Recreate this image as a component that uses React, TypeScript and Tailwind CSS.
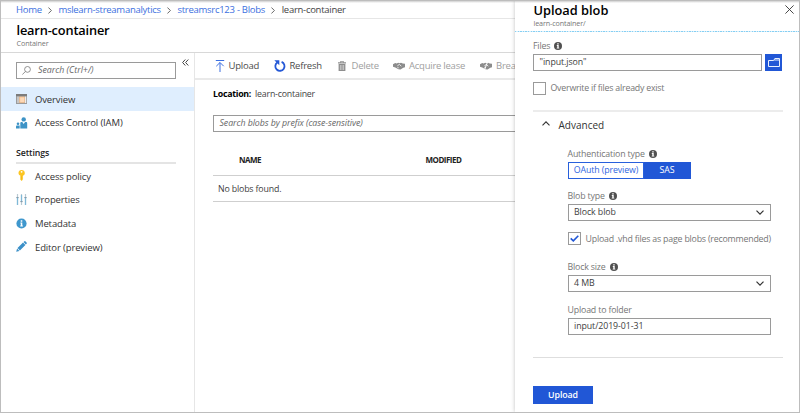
import type { ReactNode } from 'react';

function InfoIcon() {
  return (
    <svg className="h-[8px] w-[8px] shrink-0" viewBox="0 0 16 16">
      <circle cx="8" cy="8" r="8" fill="#505050" />
      <path d="M5.600 6.200h3.800v5.200h1.200v1.600H5.400v-1.600h1.200V7.800h-1zM6.500 2.700h2.900v2.500H6.500z" fill="#fff" />
    </svg>
  );
}

function Chevron() {
  return (
    <svg className="mx-[6.300px] h-[7px] w-[4px] shrink-0" viewBox="0 0 4 7" fill="none" stroke="#666" strokeWidth="1">
      <path d="M.4.500l3 3-3 3" />
    </svg>
  );
}

function OverviewIcon() {
  return (
    <svg className="h-[10px] w-[11px]" viewBox="0 0 11 10">
      <path d="M0 0h11v10H0z" fill="#9b9b9b" />
      <path d="M0 0h11v2.200H0z" fill="#7c7c7c" />
      <path d="M1 2.600h2v6.500H1z" fill="#c6c6c6" />
      <path d="M3.200 2.600h5.600v6.200H3.200z" fill="#fbc391" />
      <path d="M4.200 3.600h4v4.400h-4z" fill="#fdd9b8" />
      <path d="M9 2.600h1.200v6.500H9z" fill="#ededed" />
    </svg>
  );
}

function AccessIcon() {
  return (
    <svg className="h-[12px] w-[12px]" viewBox="0 0 12 12" fill="#3d93c6">
      <circle cx="7.700" cy="2.400" r="2.200" />
      <path d="M4.300 11.500V6.200c0-.8.5-1.300 1.300-1.300h.7L7.600 7l1.500-2.100h.8c.8 0 1.300.5 1.300 1.300v5.300z" />
      <circle cx="2" cy="6.800" r="1.300" />
      <path d="M0 11.500V9.600c0-.7.4-1.100 1-1.100h2.700v3z" />
    </svg>
  );
}

function KeyIcon() {
  return (
    <svg className="h-[11px] w-[11px]" viewBox="0 0 11 11">
      <path d="M5.600 0c1.900 0 3.200 1.200 3.200 2.900 0 1.300-.7 2.200-1.700 2.700v.7l-.6.7.6.7v.6l-.6.6.4.600-1.200 1.500-1.300-1.300V5.600c-1.100-.5-1.900-1.400-1.900-2.700C2.500 1.200 3.700 0 5.600 0z" fill="#fcc521" />
      <circle cx="5.600" cy="1.800" r=".9" fill="#fff" />
      <path d="M5.300 5.800v3.800" stroke="#e6a90c" strokeWidth=".5" />
    </svg>
  );
}

function PropertiesIcon() {
  return (
    <svg className="h-[11px] w-[11px]" viewBox="0 0 11 11">
      <path d="M1.500 0v11M5.500 0v11M9.500 0v11" stroke="#b9c9d2" strokeWidth="1.200" />
      <path d="M1.500 4v7M5.500 1v6M9.500 4v7" stroke="#7fb9d8" strokeWidth="1.200" />
      <path d="M.3 3.600h2.400M4.300 7.600h2.400M8.300 3.600h2.400" stroke="#7e98a8" strokeWidth="1" />
    </svg>
  );
}

function MetadataIcon() {
  return (
    <svg className="h-[11px] w-[11px]" viewBox="0 0 11 11">
      <circle cx="5.500" cy="5.500" r="5.100" fill="#3f97cd" />
      <path d="M4.400 4.600h1.900v3h.6v1H4.200v-1h.6v-2h-.4zM4.700 2.200h1.600v1.500H4.700z" fill="#fff" />
    </svg>
  );
}

function EditorIcon() {
  return (
    <svg className="h-[11px] w-[11px]" viewBox="0 0 11 11" fill="#3b90c8">
      <path d="M.2 10.800l.9-3.200 2.300 2.300zM1.500 7.100L7 1.600 9.400 4 3.900 9.500zM7.500 1.100L8.300.4c.4-.4.8-.4 1.200 0l1.100 1.100c.4.4.4.8 0 1.200l-.8.8z" />
    </svg>
  );
}

function UploadIcon() {
  return (
    <svg className="h-[12px] w-[10px]" viewBox="0 0 10 12" fill="none" stroke="#3c6fe0" strokeWidth="1">
      <path d="M.8.500h8.400M5 12V2.600M1.300 6.200L5 2.500l3.700 3.700" />
    </svg>
  );
}

function RefreshIcon() {
  return (
    <svg className="h-[12px] w-[12px]" viewBox="0 0 12 12">
      <path d="M7.600 1.900a4.600 4.600 0 1 1-4.300.5" fill="none" stroke="#2559d6" strokeWidth="1.800" />
      <path d="M.3.300h5v5z" fill="#2559d6" />
    </svg>
  );
}

function TrashIcon() {
  return (
    <svg className="h-[10px] w-[8px]" viewBox="0 0 8 10">
      <path d="M0 1.300h2.300V0h3.400v1.300H8v1.100H0zM.6 3h6.800v7H.6z" fill="#8e8e8e" />
      <path d="M2.400 4v5M4 4v5M5.600 4v5" stroke="#fff" strokeWidth=".5" />
      <path d="M3 .700h2v.600H3z" fill="#fff" />
    </svg>
  );
}

function HandsIcon({ broken = false }: { broken?: boolean }) {
  return (
    <svg className="h-[8px] w-[12px]" viewBox="0 0 12 8">
      <path d="M0 2.200L2.200 1l1.500.5L5.200.7l1.200.6L8 .7l1.800.8L12 1.800v3.500l-1.700.4L7.500 7.500 5.400 7.300 2.300 5.600 0 4.800z" fill="#8c8c8c" />
      <path d="M4.500 3.500l2-1 1.800 1.700M4.300 5.200l1.400.7" fill="none" stroke="#fff" strokeWidth=".8" />
      {broken && <path d="M4.400 8L7.600 0" stroke="#fff" strokeWidth="1" />}
    </svg>
  );
}

function MenuItem({ icon, children, active = false }: { icon: ReactNode; children: ReactNode; active?: boolean }) {
  return (
    <div className={`flex h-[23.700px] items-center pl-[15px] text-[9.500px] tracking-[-0.130px] text-[#333] ${active ? 'bg-[#dfeefe]' : ''}`}>
      <span className="flex w-[19px] shrink-0 items-center">{icon}</span>
      <span className="pt-[2px]">{children}</span>
    </div>
  );
}

function Tool({ icon, children, disabled = false }: { icon: ReactNode; children: ReactNode; disabled?: boolean }) {
  return (
    <div className={`flex shrink-0 items-center text-[9.500px] tracking-[-0.240px] ${disabled ? 'text-[#a0a0a0]' : 'text-[#4c4c4c]'}`}>
      {icon}
      <span className="pt-[2px]">{children}</span>
    </div>
  );
}

function Label({ children, info = false }: { children: ReactNode; info?: boolean }) {
  return (
    <div className="flex h-[16px] items-center gap-[4px] text-[8.800px] tracking-[-0.170px] text-[#767676]">
      <span className="pt-[1px]">{children}</span>
      {info && <InfoIcon />}
    </div>
  );
}

function Field({ children, select = false }: { children: ReactNode; select?: boolean }) {
  return (
    <div className="flex h-[17px] items-center justify-between border border-[#9a9a9a] pr-[6px] pl-[5.500px] text-[8.800px] tracking-[-0.080px] text-[#404040]">
      <span className="pt-[1px]">{children}</span>
      {select && (
        <svg className="h-[5px] w-[8px]" viewBox="0 0 8 5" fill="none" stroke="#333" strokeWidth="1.200">
          <path d="M.5.600L4 4.100 7.500.600" />
        </svg>
      )}
    </div>
  );
}

function Sidebar() {
  return (
    <aside className="w-[194px] shrink-0 border-r border-[#e6e6e6]">
      <div className="flex h-[34px] items-start pt-[9px] pl-[15px]">
        <div className="flex h-[17px] w-[160px] items-center border border-[#9a9a9a] pl-[5px] text-[8.800px] text-[#666] italic">
          <svg className="mr-[7px] h-[9px] w-[9px]" viewBox="0 0 9 9" fill="none" stroke="#777" strokeWidth=".8">
            <circle cx="5.500" cy="3.400" r="2.900" />
            <path d="M3.400 5.500L.3 8.600" />
          </svg>
          Search (Ctrl+/)
        </div>
        <svg className="mt-[-3px] ml-[6px] h-[7px] w-[7px]" viewBox="0 0 7 7" fill="none" stroke="#444" strokeWidth="1">
          <path d="M3.300.500L.6 3.500l2.700 3M6.300.500L3.600 3.500l2.700 3" />
        </svg>
      </div>
      <MenuItem icon={<OverviewIcon />} active>Overview</MenuItem>
      <MenuItem icon={<AccessIcon />}>Access Control (IAM)</MenuItem>
      <div className="mt-[7px] mr-[18px] ml-[15px] flex h-[22.600px] items-center border-b-2 border-[#e4e4e4] text-[8.800px] font-semibold tracking-[-0.100px] text-[#222]">
        <span className="pt-[3px]">Settings</span>
      </div>
      <MenuItem icon={<KeyIcon />}>Access policy</MenuItem>
      <MenuItem icon={<PropertiesIcon />}>Properties</MenuItem>
      <MenuItem icon={<MetadataIcon />}>Metadata</MenuItem>
      <MenuItem icon={<EditorIcon />}>Editor (preview)</MenuItem>
    </aside>
  );
}

function Blobs() {
  return (
    <main className="min-w-0 flex-1 overflow-hidden whitespace-nowrap">
      <div className="flex h-[27px] items-center border-b-2 border-[#e9e9e9] pl-[19.500px]">
        <div className="w-[59px] shrink-0"><Tool icon={<span className="mr-[4px]"><UploadIcon /></span>}>Upload</Tool></div>
        <div className="w-[64px] shrink-0"><Tool icon={<span className="mr-[4px]"><RefreshIcon /></span>}>Refresh</Tool></div>
        <div className="w-[55.500px] shrink-0"><Tool disabled icon={<span className="mr-[6px]"><TrashIcon /></span>}>Delete</Tool></div>
        <div className="w-[87px] shrink-0"><Tool disabled icon={<span className="mr-[4px]"><HandsIcon /></span>}>Acquire lease</Tool></div>
        <Tool disabled icon={<span className="mr-[4px]"><HandsIcon broken /></span>}>Break lease</Tool>
      </div>
      <div className="pl-[18px]">
        <div className="flex h-[28px] items-center pt-[1px] text-[8.800px] tracking-[-0.200px] text-[#444]">
          <span className="mr-[4px] font-bold tracking-[-0.270px] text-black">Location:</span>learn-container
        </div>
        <div className="mt-[7px] flex h-[17px] items-center border border-r-0 border-[#9a9a9a] pl-[5.500px] text-[8.800px] tracking-[-0.060px] text-[#666] italic">
          Search blobs by prefix (case-sensitive)
        </div>
        <div className="mt-[13px] flex h-[31px] items-center border-b border-[#cfcfcf] pl-[26px] text-[8px] font-bold tracking-[-0.500px] text-[#222]">
          <span className="w-[186.500px]">NAME</span>
          <span>MODIFIED</span>
        </div>
        <div className="flex h-[26px] items-center border-b border-[#cfcfcf] pt-[2px] pl-[5px] text-[8.800px] tracking-[-0.160px] text-[#404040]">No blobs found.</div>
      </div>
    </main>
  );
}

function UploadPanel() {
  return (
    <section className="z-10 flex w-[284px] shrink-0 flex-col bg-white shadow-[0_0_4px_rgba(0,0,0,0.25)]">
      <div className="h-[2px] shrink-0 bg-gradient-to-b from-[#cfcfcf] to-white" />
      <header className="flex h-[28px] shrink-0 justify-between pr-[5px] pl-[18.500px]">
        <div>
          <h2 className="text-[12.800px] leading-[15px] font-semibold text-black">Upload blob</h2>
          <p className="text-[7.200px] leading-[10px] tracking-[-0.130px] text-[#777]">learn-container/</p>
        </div>
        <svg className="mt-[2px] h-[9px] w-[9px]" viewBox="0 0 9 9" fill="none" stroke="#333" strokeWidth=".9">
          <path d="M.4.400l8.200 8.200M8.600.400L.4 8.600" />
        </svg>
      </header>
      <div className="h-px shrink-0 bg-[repeating-linear-gradient(90deg,#86cff3_0_1.500px,#d8effb_1.500px_2.600px)]" />
      <div className="mr-[16px] ml-[18px] flex flex-1 flex-col">
        <div className="mt-[6px]"><Label info>Files</Label></div>
        <div className="flex gap-[3px]">
          <div className="w-[229px]"><Field>&quot;input.json&quot;</Field></div>
          <button className="flex h-[17px] w-[17px] items-center justify-center bg-[#2157d6]">
            <svg className="h-[9px] w-[12px]" viewBox="0 0 12 9" fill="none" stroke="#e8f0ff" strokeWidth="1">
              <path d="M.5 8.500v-6h5.200L6.800.500h4.700v8z" />
              <path d="M6.200 2h5" />
            </svg>
          </button>
        </div>
        <div className="mt-[11px] flex h-[13px] items-center gap-[4.500px] text-[8.800px] tracking-[-0.220px] text-[#767676]">
          <span className="h-[13px] w-[13px] border border-[#9a9a9a]" />
          <span className="pt-[1px]">Overwrite if files already exist</span>
        </div>
        <div className="mt-[15px] flex h-[29px] items-center border-t-2 border-[#ececec] pl-[9px] text-[10px] text-[#333]">
          <svg className="mr-[8.500px] mb-[4px] h-[5px] w-[8px]" viewBox="0 0 8 5" fill="none" stroke="#333" strokeWidth="1.100">
            <path d="M.5 4.400L4 .900l3.500 3.500" />
          </svg>
          <span className="pb-[1px]">Advanced</span>
        </div>
        <div className="mr-[12px] ml-[34.500px] flex flex-col pt-[7px]">
          <Label info>Authentication type</Label>
          <div className="flex h-[17px] w-[123px] text-[8.800px]">
            <button className="w-[76px] border border-[#2860dc] pt-[1px] pl-[1px] tracking-[-0.120px] whitespace-nowrap text-[#2f66df]">OAuth (preview)</button>
            <button className="flex-1 bg-[#2157d6] pt-[1px] text-white">SAS</button>
          </div>
          <div className="mt-[9px]"><Label info>Blob type</Label></div>
          <Field select>Block blob</Field>
          <div className="mt-[11px] flex h-[13px] items-center gap-[5px] text-[8.800px] tracking-[-0.200px] whitespace-nowrap text-[#767676]">
            <span className="flex h-[13px] w-[13px] shrink-0 items-center justify-center border border-[#9a9a9a]">
              <svg className="h-[7px] w-[9px]" viewBox="0 0 9 7" fill="none" stroke="#2157d6" strokeWidth="1.600">
                <path d="M.7 3.400l2.600 2.500L8.300.700" />
              </svg>
            </span>
            <span className="pt-[2px]">Upload .vhd files as page blobs (recommended)</span>
          </div>
          <div className="mt-[14px]"><Label info>Block size</Label></div>
          <Field select>4 MB</Field>
          <div className="mt-[10px]"><Label>Upload to folder</Label></div>
          <Field>input/2019-01-31</Field>
        </div>
        <div className="mt-[22px] border-t border-[#dedede]" />
        <button className="mt-[28px] h-[18px] w-[60px] bg-[#2157d6] pt-[1px] text-[8.800px] font-semibold tracking-[-0.100px] text-white">Upload</button>
      </div>
    </section>
  );
}

export default function App() {
  return (
    <div className="flex h-[413px] w-[800px] overflow-hidden border border-[#bdbdbd] bg-white font-['Open_Sans','Noto_Sans',sans-serif]">
      <div className="flex min-w-0 flex-1 flex-col">
        <div className="h-[2px] shrink-0 bg-gradient-to-b from-[#cfcfcf] to-white" />
        <nav className="flex h-[16px] shrink-0 items-center border-b border-[#e6e6e6] pl-[15px] text-[9.500px] tracking-[-0.270px] whitespace-nowrap text-[#3c6fe0]">
          Home<Chevron />mslearn-streamanalytics<Chevron />streamsrc123 - Blobs<Chevron />
          <span className="text-[#444]">learn-container</span>
        </nav>
        <header className="h-[34px] shrink-0 border-b border-[#d8d8d8] pl-[15.500px]">
          <h1 className="pt-[3px] text-[12.800px] leading-[17px] font-semibold tracking-[-0.170px] text-black">learn-container</h1>
          <p className="text-[7.200px] leading-[9px] tracking-[-0.100px] text-[#777]">Container</p>
        </header>
        <div className="flex min-h-0 flex-1">
          <Sidebar />
          <Blobs />
        </div>
      </div>
      <UploadPanel />
    </div>
  );
}
